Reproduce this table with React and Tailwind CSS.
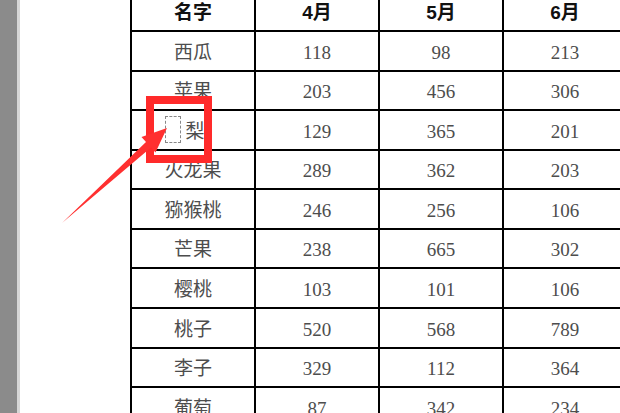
import React from "react";

const rows = [
  { name: "西瓜", a: 118, b: 98, c: 213, h: "h-[40px]" },
  { name: "苹果", a: 203, b: 456, c: 306, h: "h-[39px]" },
  { name: "梨", a: 129, b: 365, c: 201, h: "h-[40px]", gap: true },
  { name: "火龙果", a: 289, b: 362, c: 203, h: "h-[39px]" },
  { name: "猕猴桃", a: 246, b: 256, c: 106, h: "h-[40px]" },
  { name: "芒果", a: 238, b: 665, c: 302, h: "h-[39px]" },
  { name: "樱桃", a: 103, b: 101, c: 106, h: "h-[40px]" },
  { name: "桃子", a: 520, b: 568, c: 789, h: "h-[40px]" },
  { name: "李子", a: 329, b: 112, c: 364, h: "h-[39px]" },
  { name: "葡萄", a: 87, b: 342, c: 234, h: "h-[40px]" },
];

const Cell = ({ children, className = "" }) => (
  <div className={`w-[124px] shrink-0 border-l-2 border-black flex items-center justify-center ${className}`}>
    {children}
  </div>
);

export default function App() {
  return (
    <div className="relative w-[620px] h-[413px] overflow-hidden bg-white flex items-start">
      {/* page edge */}
      <div className="w-[17px] h-full shrink-0 bg-[#8b8b8b]" />
      <div className="w-[3px] h-full shrink-0 bg-[#d6d6d6]" />

      {/* table */}
      <div className="ml-[110px] flex flex-col shrink-0">
        <div
          className="flex shrink-0 h-[32px] border-b-2 border-black text-[19px] font-bold text-[#111]"
          style={{ fontFamily: '"Liberation Sans", "Noto Sans CJK SC", sans-serif' }}
        >
          <Cell className="pb-[3px]">名字</Cell>
          <Cell className="pb-[3px]">4月</Cell>
          <Cell className="pb-[3px]">5月</Cell>
          <Cell className="pb-[3px]">6月</Cell>
        </div>
        {rows.map((r) => (
          <div
            key={r.name}
            className={`flex shrink-0 ${r.h} border-b-2 border-black text-[19px] text-[#4d4d4d]`}
            style={{ fontFamily: '"Liberation Serif", "Noto Sans CJK SC", serif' }}
          >
            <Cell className={r.gap ? "pt-[4px] pr-[16px]" : "pt-[4px]"}>
              {r.gap && (
                <span className="inline-block w-[16px] h-[27px] mr-[4px] mb-[6px] border border-dashed border-[#888]" />
              )}
              {r.name}
            </Cell>
            <Cell className="pt-[4px]">{r.a}</Cell>
            <Cell className="pt-[4px]">{r.b}</Cell>
            <Cell className="pt-[4px]">{r.c}</Cell>
          </div>
        ))}
      </div>

      {/* red highlight box */}
      <div className="absolute left-[146px] top-[96px] w-[66px] h-[67px] border-[8px] border-[#ff2a2a]" />

      {/* red arrow */}
      <svg className="absolute left-0 top-0" width="620" height="413" viewBox="0 0 620 413">
        <polygon
          points="62,223 146,142 141.5,137 167,128 155.5,152.5 151,147.5"
          fill="#ff3030"
        />
      </svg>
    </div>
  );
}
